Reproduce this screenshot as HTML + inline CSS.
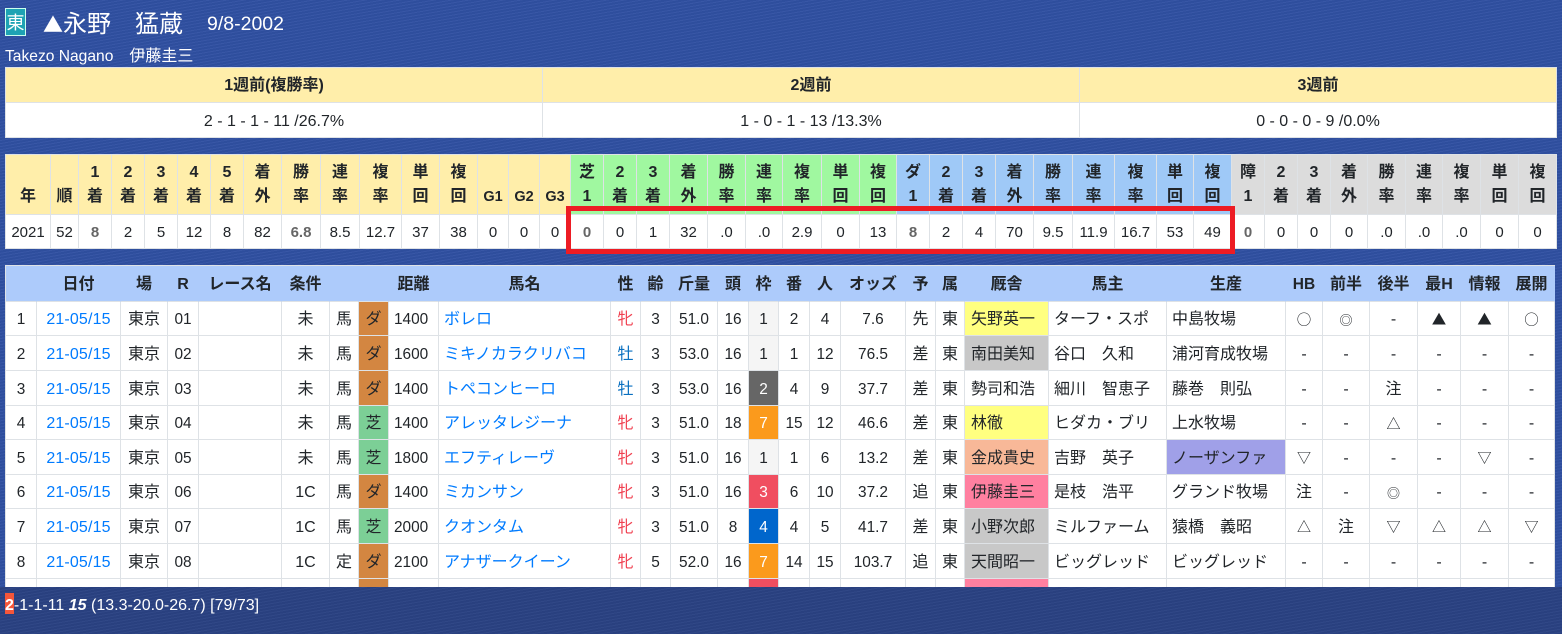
<!DOCTYPE html>
<html lang="ja"><head><meta charset="utf-8"><title>永野猛蔵</title>
<style>
html,body{margin:0;padding:0}
body{width:1562px;height:634px;position:relative;overflow:hidden;color:#212529;
font-family:"Liberation Sans","Noto Sans CJK JP",sans-serif;font-size:16px;
background-color:#3050a2;
background-image:repeating-linear-gradient(170deg,rgba(255,255,255,.04) 0 1px,rgba(0,0,0,.03) 1px 3px)}
.a{position:absolute;white-space:nowrap}
table{position:absolute;border-collapse:separate;border-spacing:0;table-layout:fixed;background:#fff;border-left:1px solid #dee2e6;border-top:1px solid #dee2e6}
td,th{border-right:1px solid #dee2e6;border-bottom:1px solid #dee2e6;padding:0;text-align:center;box-sizing:border-box;white-space:nowrap;overflow:hidden;line-height:20px}
#t1 th{background:#ffeeaa;height:35px;font-size:16px;padding-top:2px}
#t1 td{height:35px;font-size:16px;padding-top:3px}
#t2 th{height:60px;vertical-align:bottom;line-height:24px;padding-bottom:5px;font-size:16px;background:#ffeeaa}
#t2 th.gg{font-size:14.5px}
#t2 th.g{background:#a0f8a0}
#t2 th.b{background:#9fc9f7}
#t2 th.k{background:#dcdcdc}
#t2 td{height:34px;font-size:15px;padding-top:3px}
#t2 b{color:#666}
#t3 th{height:36px;background:#adcbfb;font-size:16px;border-right-color:#adcbfb;border-bottom-color:#dee2e6;padding-top:2px}
#t3 th.e{font-size:15.5px}
#t3 td{font-size:15.4px;padding-top:3px}
#t3 td:nth-child(3),#t3 td:nth-child(6),#t3 td:nth-child(7),#t3 td:nth-child(8),#t3 td:nth-child(10),#t3 td:nth-child(11),#t3 td:nth-child(19),#t3 td:nth-child(20),#t3 td:nth-child(21),#t3 td:nth-child(22),#t3 td:nth-child(23){font-size:16px}
#t3 td:nth-child(n+24){font-size:16px}
#t3 td:nth-child(2){font-size:16px;letter-spacing:.15px}
#t3 td:nth-child(9),#t3 td:nth-child(10),#t3 td:nth-child(22),#t3 td:nth-child(23){text-align:left;padding-left:5px}
#t3 td:nth-child(21){text-align:left;padding-left:6px}
a{color:#007bff;text-decoration:none}
.f{color:#f04050}.m{color:#0a70c0}
.d{background:#d38641}.s{background:#7ccf96}
.w1{background:#f5f5f5}.w2{background:#666;color:#fff}.w3{background:#f04e60;color:#fff}.w4{background:#0066cc;color:#fff}.w7{background:#fb9a1c;color:#fff}
.y{background:#ffff80}.h{background:#c8c8c8}.o{background:#f8b898}.p{background:#ff80a0}.v{background:#a0a0e8}
.c{font-family:"Noto Sans CJK JP",sans-serif;font-size:14.5px;font-style:normal;line-height:20px}
.t{font-family:"Noto Sans CJK JP",sans-serif;font-size:14px;font-style:normal;line-height:20px}
.r{font-family:"Noto Sans CJK JP",sans-serif;font-size:13px;font-style:normal;line-height:20px}
#clip{position:absolute;left:0;top:0;width:1562px;height:587px;overflow:hidden}
#foot{position:absolute;left:0;top:587px;width:1562px;height:47px;background-color:#2a4283;background-image:repeating-linear-gradient(170deg,rgba(255,255,255,.03) 0 1px,rgba(0,0,0,.03) 1px 3px);color:#fff;font-size:16px}
</style></head><body>
<div class="a" style="left:5px;top:8px;width:19px;height:26px;background:#1ea3b4;border:1px solid #cfe;color:#fff;font-size:18px;line-height:29px;text-align:center">東</div>
<div class="a" style="left:43px;top:7px;color:#fff;font-size:24px;line-height:34px"><span style="display:inline-block;width:20px;font-family:'Noto Sans CJK JP',sans-serif;font-size:20px;line-height:34px">▲</span>永野　猛蔵</div>
<div class="a" style="left:207px;top:10px;color:#fff;font-size:19.5px;line-height:28px">9/8-2002</div>
<div class="a" style="left:5px;top:46px;color:#fff;font-size:15.6px;line-height:22px">Takezo Nagano<span style="font-size:16px">　伊藤圭三</span></div>

<div id="clip">
<table id="t1" style="left:5px;top:67px;width:1552px">
<colgroup><col style="width:537px"><col style="width:537px"><col style="width:477px"></colgroup>
<tr><th>1週前(複勝率)</th><th>2週前</th><th>3週前</th></tr>
<tr><td>2 - 1 - 1 - 11 /26.7%</td><td>1 - 0 - 1 - 13 /13.3%</td><td>0 - 0 - 0 - 9 /0.0%</td></tr>
</table>

<table id="t2" style="left:5px;top:154px;width:1552px">
<colgroup><col style="width:45px"><col style="width:28px"><col style="width:33px"><col style="width:33px"><col style="width:33px"><col style="width:33px"><col style="width:33px"><col style="width:38px"><col style="width:39px"><col style="width:39px"><col style="width:42px"><col style="width:38px"><col style="width:38px"><col style="width:31px"><col style="width:31px"><col style="width:31px"><col style="width:33px"><col style="width:33px"><col style="width:33px"><col style="width:38px"><col style="width:38px"><col style="width:37px"><col style="width:39px"><col style="width:38px"><col style="width:37px"><col style="width:33px"><col style="width:33px"><col style="width:33px"><col style="width:38px"><col style="width:39px"><col style="width:42px"><col style="width:42px"><col style="width:37px"><col style="width:38px"><col style="width:33px"><col style="width:33px"><col style="width:33px"><col style="width:37px"><col style="width:38px"><col style="width:37px"><col style="width:38px"><col style="width:38px"><col style="width:38px"></colgroup>
<tr><th>年</th><th>順</th><th>1<br>着</th><th>2<br>着</th><th>3<br>着</th><th>4<br>着</th><th>5<br>着</th><th>着<br>外</th><th>勝<br>率</th><th>連<br>率</th><th>複<br>率</th><th>単<br>回</th><th>複<br>回</th><th class="gg">G1</th><th class="gg">G2</th><th class="gg">G3</th>
<th class="g">芝<br>1</th><th class="g">2<br>着</th><th class="g">3<br>着</th><th class="g">着<br>外</th><th class="g">勝<br>率</th><th class="g">連<br>率</th><th class="g">複<br>率</th><th class="g">単<br>回</th><th class="g">複<br>回</th>
<th class="b">ダ<br>1</th><th class="b">2<br>着</th><th class="b">3<br>着</th><th class="b">着<br>外</th><th class="b">勝<br>率</th><th class="b">連<br>率</th><th class="b">複<br>率</th><th class="b">単<br>回</th><th class="b">複<br>回</th>
<th class="k">障<br>1</th><th class="k">2<br>着</th><th class="k">3<br>着</th><th class="k">着<br>外</th><th class="k">勝<br>率</th><th class="k">連<br>率</th><th class="k">複<br>率</th><th class="k">単<br>回</th><th class="k">複<br>回</th></tr>
<tr><td>2021</td><td>52</td><td><b>8</b></td><td>2</td><td>5</td><td>12</td><td>8</td><td>82</td><td><b>6.8</b></td><td>8.5</td><td>12.7</td><td>37</td><td>38</td><td>0</td><td>0</td><td>0</td>
<td><b>0</b></td><td>0</td><td>1</td><td>32</td><td>.0</td><td>.0</td><td>2.9</td><td>0</td><td>13</td>
<td><b>8</b></td><td>2</td><td>4</td><td>70</td><td>9.5</td><td>11.9</td><td>16.7</td><td>53</td><td>49</td>
<td><b>0</b></td><td>0</td><td>0</td><td>0</td><td>.0</td><td>.0</td><td>.0</td><td>0</td><td>0</td></tr>
</table>

<table id="t3" style="left:5px;top:265px;width:1550px">
<colgroup><col style="width:31px"><col style="width:84px"><col style="width:47px"><col style="width:31px"><col style="width:83px"><col style="width:48px"><col style="width:29px"><col style="width:30px"><col style="width:50px"><col style="width:172px"><col style="width:30px"><col style="width:30px"><col style="width:47px"><col style="width:31px"><col style="width:30px"><col style="width:31px"><col style="width:31px"><col style="width:65px"><col style="width:30px"><col style="width:29px"><col style="width:84px"><col style="width:118px"><col style="width:119px"><col style="width:37px"><col style="width:47px"><col style="width:48px"><col style="width:43px"><col style="width:48px"><col style="width:46px"></colgroup>
<tr><th></th><th>日付</th><th>場</th><th>R</th><th>レース名</th><th>条件</th><th></th><th></th><th>距離</th><th>馬名</th><th>性</th><th>齢</th><th>斤量</th><th>頭</th><th>枠</th><th>番</th><th>人</th><th>オッズ</th><th>予</th><th>属</th><th>厩舎</th><th>馬主</th><th>生産</th><th class="e">HB</th><th>前半</th><th>後半</th><th>最H</th><th>情報</th><th>展開</th></tr>
<tr style="height:34px"><td>1</td><td><a>21-05/15</a></td><td>東京</td><td>01</td><td></td><td>未</td><td>馬</td><td class="d">ダ</td><td>1400</td><td><a>ボレロ</a></td><td class="f">牝</td><td>3</td><td>51.0</td><td>16</td><td class="w1">1</td><td>2</td><td>4</td><td>7.6</td><td>先</td><td>東</td><td class="y">矢野英一</td><td>ターフ・スポ</td><td>中島牧場</td><td><i class="c">○</i></td><td><i class="r">◎</i></td><td>-</td><td><i class="c">▲</i></td><td><i class="c">▲</i></td><td><i class="c">○</i></td></tr>
<tr style="height:35px"><td>2</td><td><a>21-05/15</a></td><td>東京</td><td>02</td><td></td><td>未</td><td>馬</td><td class="d">ダ</td><td>1600</td><td><a>ミキノカラクリバコ</a></td><td class="m">牡</td><td>3</td><td>53.0</td><td>16</td><td class="w1">1</td><td>1</td><td>12</td><td>76.5</td><td>差</td><td>東</td><td class="h">南田美知</td><td>谷口　久和</td><td>浦河育成牧場</td><td>-</td><td>-</td><td>-</td><td>-</td><td>-</td><td>-</td></tr>
<tr style="height:35px"><td>3</td><td><a>21-05/15</a></td><td>東京</td><td>03</td><td></td><td>未</td><td>馬</td><td class="d">ダ</td><td>1400</td><td><a>トペコンヒーロ</a></td><td class="m">牡</td><td>3</td><td>53.0</td><td>16</td><td class="w2">2</td><td>4</td><td>9</td><td>37.7</td><td>差</td><td>東</td><td>勢司和浩</td><td>細川　智恵子</td><td>藤巻　則弘</td><td>-</td><td>-</td><td>注</td><td>-</td><td>-</td><td>-</td></tr>
<tr style="height:34px"><td>4</td><td><a>21-05/15</a></td><td>東京</td><td>04</td><td></td><td>未</td><td>馬</td><td class="s">芝</td><td>1400</td><td><a>アレッタレジーナ</a></td><td class="f">牝</td><td>3</td><td>51.0</td><td>18</td><td class="w7">7</td><td>15</td><td>12</td><td>46.6</td><td>差</td><td>東</td><td class="y">林徹</td><td>ヒダカ・ブリ</td><td>上水牧場</td><td>-</td><td>-</td><td><i class="t">△</i></td><td>-</td><td>-</td><td>-</td></tr>
<tr style="height:35px"><td>5</td><td><a>21-05/15</a></td><td>東京</td><td>05</td><td></td><td>未</td><td>馬</td><td class="s">芝</td><td>1800</td><td><a>エフティレーヴ</a></td><td class="f">牝</td><td>3</td><td>51.0</td><td>16</td><td class="w1">1</td><td>1</td><td>6</td><td>13.2</td><td>差</td><td>東</td><td class="o">金成貴史</td><td>吉野　英子</td><td class="v">ノーザンファ</td><td><i class="t">▽</i></td><td>-</td><td>-</td><td>-</td><td><i class="t">▽</i></td><td>-</td></tr>
<tr style="height:34px"><td>6</td><td><a>21-05/15</a></td><td>東京</td><td>06</td><td></td><td>1C</td><td>馬</td><td class="d">ダ</td><td>1400</td><td><a>ミカンサン</a></td><td class="f">牝</td><td>3</td><td>51.0</td><td>16</td><td class="w3">3</td><td>6</td><td>10</td><td>37.2</td><td>追</td><td>東</td><td class="p">伊藤圭三</td><td>是枝　浩平</td><td>グランド牧場</td><td>注</td><td>-</td><td><i class="r">◎</i></td><td>-</td><td>-</td><td>-</td></tr>
<tr style="height:35px"><td>7</td><td><a>21-05/15</a></td><td>東京</td><td>07</td><td></td><td>1C</td><td>馬</td><td class="s">芝</td><td>2000</td><td><a>クオンタム</a></td><td class="f">牝</td><td>3</td><td>51.0</td><td>8</td><td class="w4">4</td><td>4</td><td>5</td><td>41.7</td><td>差</td><td>東</td><td class="h">小野次郎</td><td>ミルファーム</td><td>猿橋　義昭</td><td><i class="t">△</i></td><td>注</td><td><i class="t">▽</i></td><td><i class="t">△</i></td><td><i class="t">△</i></td><td><i class="t">▽</i></td></tr>
<tr style="height:35px"><td>8</td><td><a>21-05/15</a></td><td>東京</td><td>08</td><td></td><td>1C</td><td>定</td><td class="d">ダ</td><td>2100</td><td><a>アナザークイーン</a></td><td class="f">牝</td><td>5</td><td>52.0</td><td>16</td><td class="w7">7</td><td>14</td><td>15</td><td>103.7</td><td>追</td><td>東</td><td class="h">天間昭一</td><td>ビッグレッド</td><td>ビッグレッド</td><td>-</td><td>-</td><td>-</td><td>-</td><td>-</td><td>-</td></tr>
<tr style="height:35px"><td></td><td></td><td></td><td></td><td></td><td></td><td></td><td class="d"></td><td></td><td></td><td></td><td></td><td></td><td></td><td class="w3"></td><td></td><td></td><td></td><td></td><td></td><td class="p"></td><td></td><td></td><td></td><td></td><td></td><td></td><td></td><td></td></tr>
</table>
<div class="a" style="left:566px;top:206px;width:659px;height:38px;border:5px solid #ed1c24"></div>
</div>

<div id="foot"><div class="a" style="left:5px;top:6px;width:9px;height:21px;background:#f5563a"></div><div class="a" style="left:5px;top:6px;line-height:25px"><b>2</b>-1-1-11 <b><i>15</i></b> (13.3-20.0-26.7) [79/73]</div></div>
</body></html>
